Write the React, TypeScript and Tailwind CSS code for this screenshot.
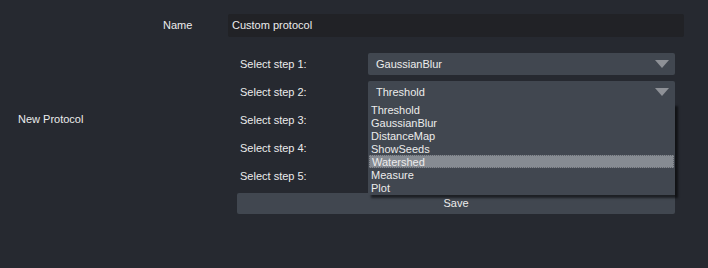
import React from "react";

const Arrow = () => (
  <svg width="14" height="8" viewBox="0 0 14 8" className="shrink-0">
    <polygon points="0,0 14,0 7,8" fill="#8e9197" />
  </svg>
);

const items = ["Threshold", "GaussianBlur", "DistanceMap", "ShowSeeds", "Watershed", "Measure", "Plot"];

export default function App() {
  return (
    <div
      className="w-[708px] h-[268px] bg-[#262930] text-[#ececec] text-[11px] leading-[13px] flex overflow-hidden"
      style={{ fontFamily: '"Liberation Sans", Arial, sans-serif' }}
    >
      <div className="w-[163px] shrink-0 pl-[18px] pt-[113px]">New Protocol</div>
      <div className="flex flex-col pt-[14px]">
        <div className="flex items-center h-[23px]">
          <div className="w-[65px]">Name</div>
          <div className="w-[456px] h-[23px] bg-[#212226] rounded-[2px] flex items-center pl-[4px]">
            Custom protocol
          </div>
        </div>
        <div className="ml-[74px] w-[438px] mt-[16px] flex flex-col gap-[6px]">
          {[1, 2, 3, 4, 5].map((n) => (
            <div key={n} className="flex items-center h-[22px]">
              <div className="w-[131px] pl-[3px]">Select step {n}:</div>
              <div className="relative flex-1 h-[22px]">
                <div
                  className={
                    n === 2
                      ? "h-[22px] bg-[#414750] rounded-t-[2px] flex items-center justify-between pl-[8px] pr-[6px]"
                      : "h-[22px] bg-[#414750] rounded-[2px] flex items-center justify-between pl-[8px] pr-[6px]"
                  }
                >
                  <span>{n === 1 ? "GaussianBlur" : n === 2 ? "Threshold" : ""}</span>
                  <Arrow />
                </div>
                {n === 2 && (
                  <div className="absolute left-0 top-[22px] w-[307px] h-[92px] bg-[#414750] z-10 shadow-[3px_3px_2px_rgba(0,0,0,0.55)] flex flex-col">
                    {items.map((it) => (
                      <div
                        key={it}
                        className={
                          it === "Watershed"
                            ? "h-[13px] mx-[1px] pl-[2px] pt-[1px] bg-[#868b92] border border-dotted border-[#5f636a] flex items-center"
                            : "h-[13px] pl-[3px] pt-[1px] flex items-center"
                        }
                      >
                        {it}
                      </div>
                    ))}
                  </div>
                )}
              </div>
            </div>
          ))}
          <div className="h-[21px] bg-[#414750] rounded-[2px] flex items-center justify-center">Save</div>
        </div>
      </div>
    </div>
  );
}
